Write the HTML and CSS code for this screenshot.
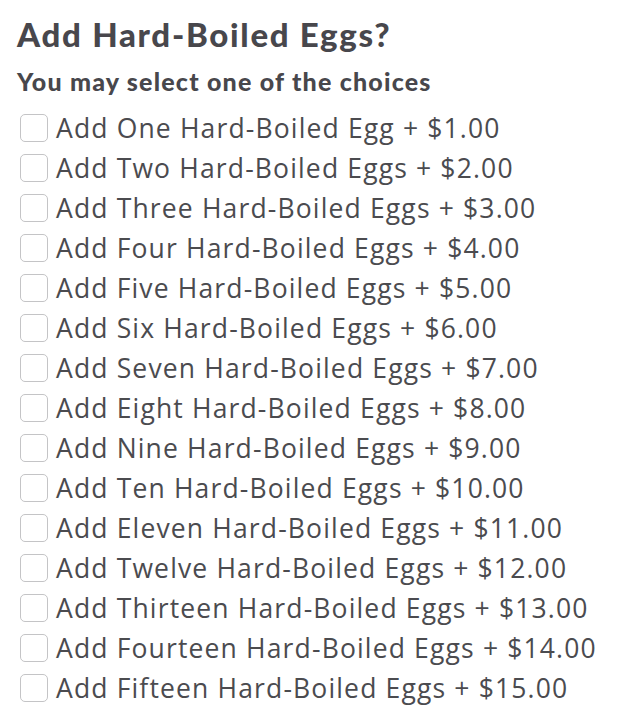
FILE: index.html
```html
<!DOCTYPE html>
<html>
<head>
<meta charset="utf-8">
<link rel="stylesheet" href="styles.css">
</head>
<body>
<div class="panel">
  <h1 class="title">Add Hard-Boiled Eggs?</h1>
  <h2 class="subtitle">You may select one of the choices</h2>
  <ul class="choices">
    <li class="choice"><span class="box"></span><span class="label">Add One Hard-Boiled Egg + $1.00</span></li>
    <li class="choice"><span class="box"></span><span class="label">Add Two Hard-Boiled Eggs + $2.00</span></li>
    <li class="choice"><span class="box"></span><span class="label">Add Three Hard-Boiled Eggs + $3.00</span></li>
    <li class="choice"><span class="box"></span><span class="label">Add Four Hard-Boiled Eggs + $4.00</span></li>
    <li class="choice"><span class="box"></span><span class="label">Add Five Hard-Boiled Eggs + $5.00</span></li>
    <li class="choice"><span class="box"></span><span class="label">Add Six Hard-Boiled Eggs + $6.00</span></li>
    <li class="choice"><span class="box"></span><span class="label">Add Seven Hard-Boiled Eggs + $7.00</span></li>
    <li class="choice"><span class="box"></span><span class="label">Add Eight Hard-Boiled Eggs + $8.00</span></li>
    <li class="choice"><span class="box"></span><span class="label">Add Nine Hard-Boiled Eggs + $9.00</span></li>
    <li class="choice"><span class="box"></span><span class="label">Add Ten Hard-Boiled Eggs + $10.00</span></li>
    <li class="choice"><span class="box"></span><span class="label">Add Eleven Hard-Boiled Eggs + $11.00</span></li>
    <li class="choice"><span class="box"></span><span class="label">Add Twelve Hard-Boiled Eggs + $12.00</span></li>
    <li class="choice"><span class="box"></span><span class="label">Add Thirteen Hard-Boiled Eggs + $13.00</span></li>
    <li class="choice"><span class="box"></span><span class="label">Add Fourteen Hard-Boiled Eggs + $14.00</span></li>
    <li class="choice"><span class="box"></span><span class="label">Add Fifteen Hard-Boiled Eggs + $15.00</span></li>
  </ul>
</div>
</body>
</html>
```
FILE: styles.css
```css
html, body {
  margin: 0;
  padding: 0;
  background: #ffffff;
}
.panel {
  padding: 14px 0 0 17px;
  color: #48474c;
}
.title {
  margin: 0;
  font-family: Lato, "Open Sans", sans-serif;
  font-weight: 900;
  font-size: 33px;
  line-height: 40px;
  letter-spacing: 1.7px;
}
.subtitle {
  margin: 12px 0 0 0;
  font-family: Lato, "Open Sans", sans-serif;
  font-weight: 900;
  font-size: 25px;
  line-height: 30px;
  letter-spacing: 1.2px;
}
.choices {
  list-style: none;
  margin: 12px 0 0 0;
  padding: 0;
}
.choice {
  display: flex;
  align-items: center;
  gap: 8px;
  height: 40px;
  padding-left: 3px;
}
.box {
  width: 26px;
  height: 26px;
  border: 1px solid #c4c4c6;
  border-radius: 5px;
  flex: none;
}
.label {
  font-family: "Open Sans", sans-serif;
  font-size: 26.5px;
  letter-spacing: 1.15px;
  color: #4b4b4f;
}
```
